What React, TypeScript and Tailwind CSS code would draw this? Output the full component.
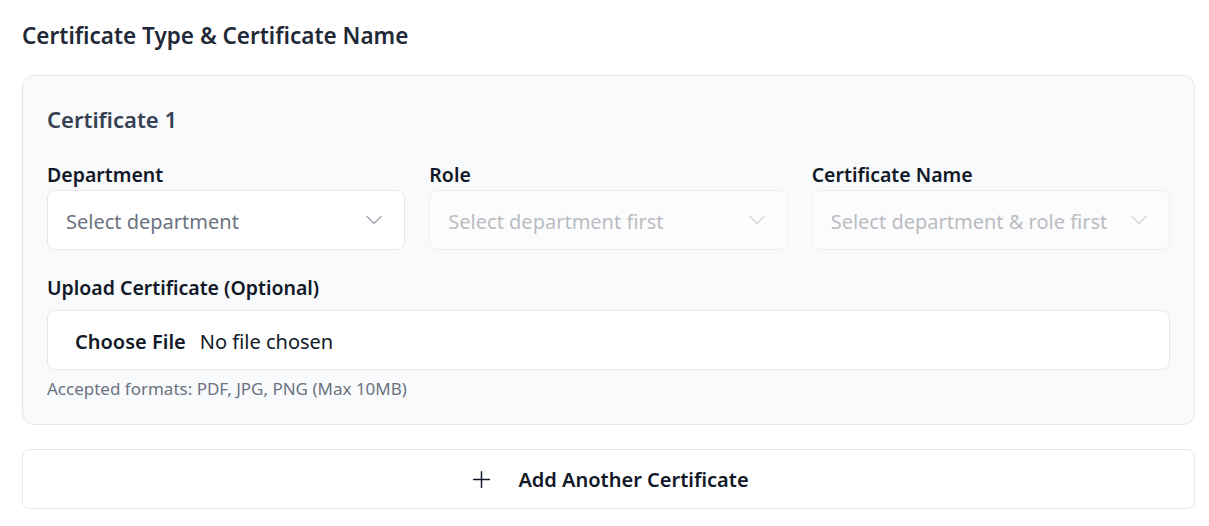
import { ChevronDown, Plus } from "lucide-react"

const selects = [
  { label: "Department", placeholder: "Select department", disabled: false },
  { label: "Role", placeholder: "Select department first", disabled: true },
  { label: "Certificate Name", placeholder: "Select department & role first", disabled: true },
]

function SelectBox({ placeholder, disabled }: { placeholder: string; disabled: boolean }) {
  return (
    <div
      className={
        "flex h-[60px] items-center justify-between rounded-lg border pr-4 pl-[18px] " +
        (disabled ? "border-[#eef0f3] bg-[#fcfcfd]" : "border-[#e5e7eb] bg-white")
      }
    >
      <span className={"pt-[3px] text-[20px] " + (disabled ? "text-[#b9bcc3]" : "text-[#6b7280]")}>
        {placeholder}
      </span>
      <ChevronDown
        size={28}
        strokeWidth={1.1}
        className={disabled ? "text-[#d1d5db]" : "text-[#9ca3af]"}
      />
    </div>
  )
}

export default function App() {
  return (
    <div className="bg-white pt-[21px] pr-[14px] pl-[22px] font-['Noto_Sans',sans-serif] text-[#1f2937]">
      <h2 className="mb-[24px] text-[22.5px] leading-[30px] font-semibold text-[#1f2937]">
        Certificate Type &amp; Certificate Name
      </h2>

      {/* Certificate card */}
      <div className="rounded-xl border border-[#e5e7eb] bg-[#f9fafb] px-6 pt-[29px] pb-[23px]">
        <h3 className="text-[22px] leading-[28px] font-semibold text-[#374151]">Certificate 1</h3>

        <div className="mt-[28px] grid grid-cols-3 gap-6">
          {selects.map((s) => (
            <div key={s.label}>
              <label className="mb-[1px] block text-[19.5px] leading-[28px] font-semibold text-[#111827]">
                {s.label}
              </label>
              <SelectBox placeholder={s.placeholder} disabled={s.disabled} />
            </div>
          ))}
        </div>

        <label className="mt-6 mb-2 block text-[19.5px] leading-[28px] font-semibold text-[#111827]">
          Upload Certificate (Optional)
        </label>
        <div className="flex h-[60px] items-center rounded-lg border border-[#e5e7eb] bg-white px-[27px] pt-[3px]">
          <span className="text-[20px] font-semibold text-[#111827]">Choose File</span>
          <span className="ml-[14px] text-[20px] text-[#111827]">No file chosen</span>
        </div>
        <p className="mt-[7px] text-[17px] leading-[24px] text-[#6b7280]">
          Accepted formats: PDF, JPG, PNG (Max 10MB)
        </p>
      </div>

      {/* Add button */}
      <button className="mt-[24px] flex h-[60px] w-full items-center justify-center gap-[23px] rounded-lg border border-[#e5e7eb] bg-white">
        <Plus size={27} strokeWidth={1.3} className="text-[#111827]" />
        <span className="pt-[2px] text-[20px] font-semibold text-[#111827]">Add Another Certificate</span>
      </button>
    </div>
  )
}
